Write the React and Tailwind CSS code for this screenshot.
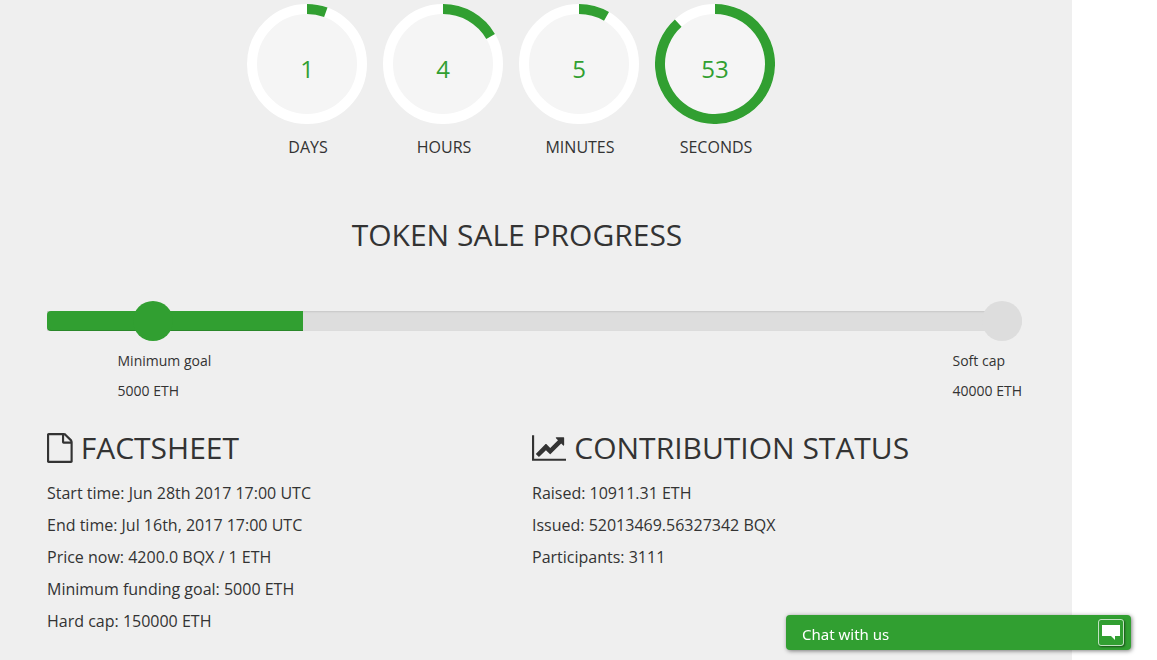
import React from 'react';

const timers = [
    { label: 'DAYS', value: 1, angle: 20 },
    { label: 'HOURS', value: 4, angle: 60 },
    { label: 'MINUTES', value: 5, angle: 30 },
    { label: 'SECONDS', value: 53, angle: 318 },
];

const facts = [
    'Start time: Jun 28th 2017 17:00 UTC',
    'End time: Jul 16th, 2017 17:00 UTC',
    'Price now: 4200.0 BQX / 1 ETH',
    'Minimum funding goal: 5000 ETH',
    'Hard cap: 150000 ETH',
];

const statuses = [
    'Raised: 10911.31 ETH',
    'Issued: 52013469.56327342 BQX',
    'Participants: 3111',
];

const FileIcon = () => (
    <svg viewBox="0 0 1536 1792" className="h-[30px] w-[25.7px] shrink-0 fill-current">
        <path d="M1468 380q28 28 48 76t20 88v1152q0 40-28 68t-68 28h-1344q-40 0-68-28t-28-68v-1600q0-40 28-68t68-28h896q40 0 88 20t76 48zM1024 136v376h376q-10-29-22-41l-313-313q-12-12-41-22zM1408 1664v-1024h-416q-40 0-68-28t-28-68v-416h-768v1536h1280z" />
    </svg>
);

const ChartIcon = () => (
    <svg viewBox="0 0 2048 1792" className="h-[30px] w-[34.3px] shrink-0 fill-current">
        <path d="M2048 1536v128h-2048v-1536h128v1408h1920zM1920 288v435q0 21-19.5 29.5t-35.5-7.5l-121-121-633 633q-10 10-23 10t-23-10l-233-233-416 416-192-192 585-585q10-10 23-10t23 10l233 233 464-464-121-121q-16-16-7.5-35.5t29.5-19.5h435q14 0 23 9t9 23z" />
    </svg>
);

const Timer = ({ label, value, angle }) => {
    const rad = (angle * Math.PI) / 180;
    const x = 60 + 55 * Math.sin(rad);
    const y = 60 - 55 * Math.cos(rad);

    return (
        <div className="w-[120px]">
            <div className="relative h-[120px]">
                <svg viewBox="0 0 120 120" className="block h-[120px] w-[120px]">
                    <circle cx="60" cy="60" r="55" fill="#f5f5f5" stroke="#fff" strokeWidth="10" />
                    <path
                        d={`M60 5A55 55 0 ${angle > 180 ? 1 : 0} 1 ${x} ${y}`}
                        fill="none"
                        stroke="#319f31"
                        strokeWidth="10"
                    />
                </svg>
                <span className="absolute inset-0 flex items-center justify-center pt-[10px] text-2xl text-[#319f31]">
                    {value}
                </span>
            </div>
            <div className="mt-[11px] pl-[2px] text-center text-base leading-6">{label}</div>
        </div>
    );
};

const InfoList = ({ icon, title, items }) => (
    <div>
        <h2 className="flex h-[34px] items-center gap-2 text-[30px] leading-[34px]">
            {icon}
            {title}
        </h2>
        <ul className="mt-3 text-base leading-8">
            {items.map((item) => (
                <li key={item}>{item}</li>
            ))}
        </ul>
    </div>
);

const App = () => {
    return (
        <div className="h-[660px] overflow-hidden bg-white font-['Open_Sans',sans-serif] font-normal text-[#333]">
            <div className="h-full w-[1072px] bg-[#efefef] pt-1 pr-[50px] pl-[47px]">
                <div className="ml-[200px] flex gap-4">
                    {timers.map((timer) => (
                        <Timer key={timer.label} {...timer} />
                    ))}
                </div>

                <h2 className="mt-[56px] pr-[35px] text-center text-[30px] leading-10">TOKEN SALE PROGRESS</h2>

                <div className="relative mt-[56px] h-5 rounded-l rounded-r-full bg-[#ddd] shadow-[inset_0_1px_2px_rgba(0,0,0,0.1)]">
                    <div className="h-full w-[256px] rounded-l bg-[#319f31] shadow-[inset_0_-1px_0_rgba(0,0,0,0.15)]" />
                    <div className="absolute -top-[10px] left-[86px] size-10 rounded-full bg-[#319f31]" />
                    <div className="absolute -top-[10px] right-0 size-10 rounded-full bg-[#ddd]" />
                </div>
                <div className="mt-[15px] flex justify-between pl-[70.5px] text-sm leading-[30px]">
                    <div>
                        <p>Minimum goal</p>
                        <p>5000 ETH</p>
                    </div>
                    <div>
                        <p>Soft cap</p>
                        <p>40000 ETH</p>
                    </div>
                </div>

                <div className="mt-[25px] grid grid-cols-[485px_1fr]">
                    <InfoList icon={<FileIcon />} title="FACTSHEET" items={facts} />
                    <InfoList icon={<ChartIcon />} title="CONTRIBUTION STATUS" items={statuses} />
                </div>
            </div>

            <button className="fixed top-[615px] left-[786px] flex h-[35px] w-[345px] items-center justify-between rounded bg-[#319f31] pr-[7px] pl-4 font-['Noto_Sans',sans-serif] text-[15px] font-normal text-white shadow-[1px_1px_4px_rgba(0,0,0,0.5)]">
                <span className="pt-[3px]">Chat with us</span>
                <span className="flex h-[27px] w-[26px] items-center justify-center rounded-[3px] border border-white/70 shadow-[1px_1px_2px_rgba(0,0,0,0.5)]">
                    <svg viewBox="0 0 18 15" className="h-[15px] w-[18px] fill-white">
                        <path d="M0 0h18v11h-5v4l-4-4H0z" />
                    </svg>
                </span>
            </button>
        </div>
    );
};

export default App;
